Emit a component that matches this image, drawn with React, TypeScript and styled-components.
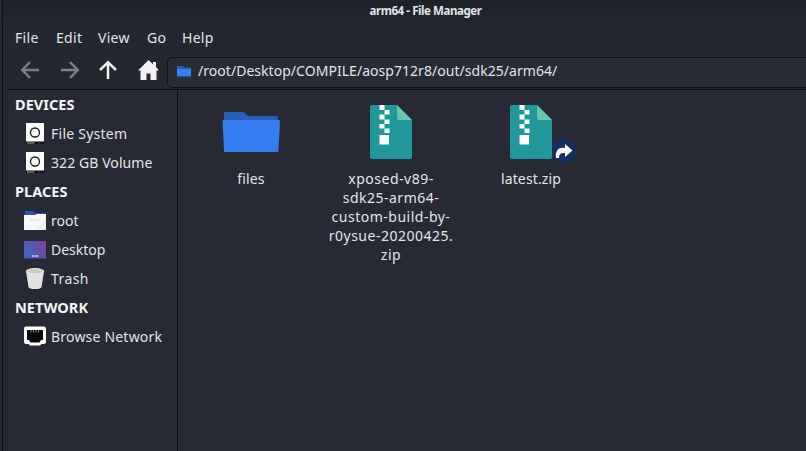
import React from "react";
import styled, { createGlobalStyle } from "styled-components";

const GlobalStyle = createGlobalStyle`
  * { box-sizing: border-box; }
  body {
    margin: 0;
    overflow: hidden;
    background: #272a34;
    color: #e2e4e9;
    font-family: "Noto Sans", "Open Sans", sans-serif;
    font-size: 14px;
  }
`;

const Window = styled.div`
  width: 806px;
  height: 451px;
  display: flex;
  flex-direction: column;
  background: #232730;
  border-left: 2px solid #242832;
  box-shadow: inset 1px 0 0 #0d0f18;
  overflow: hidden;
`;

const TitleBar = styled.header`
  height: 24px;
  flex: none;
  padding: 0 0 4px 43px;
  display: flex;
  align-items: center;
  justify-content: center;
  background: linear-gradient(#1d2129, #22262f);
  box-shadow: inset 1px 0 0 #0d0f18;
  font-size: 11.5px;
  font-weight: 700;
  letter-spacing: -0.42px;
`;

const MenuBar = styled.nav`
  height: 30px;
  flex: none;
  display: flex;
  align-items: center;
  padding: 0 0 2px 13px;
  letter-spacing: 0.3px;
`;

const MenuItem = styled.span<{ $width: number }>`
  width: ${(p) => p.$width}px;
  white-space: nowrap;
  line-height: 20px;
`;

const Toolbar = styled.div`
  height: 35px;
  flex: none;
  display: flex;
  align-items: center;
  padding-left: 18px;
`;

const NavButton = styled.span<{ $width: number; $dim?: boolean }>`
  width: ${(p) => p.$width}px;
  height: 32px;
  display: flex;
  flex: none;
  align-items: center;
  padding-bottom: 3px;
  color: ${(p) => (p.$dim ? "#7d8088" : "#f1f2f1")};
`;

const PathField = styled.div`
  flex: 1;
  height: 31px;
  margin: 1px -6px 0 0;
  display: flex;
  align-items: center;
  gap: 7px;
  padding: 0 0 2px 9px;
  border: 1px solid #0e111a;
  border-radius: 5px;
  background: #272b35;
  white-space: nowrap;
`;

const PathText = styled.span`
  line-height: 20px;
  letter-spacing: 0.04px;
`;

const Body = styled.div`
  flex: 1;
  display: flex;
  margin-left: 6px;
  border-top: 1px solid #0b0d14;
  background: #272a34;
`;

const Sidebar = styled.aside`
  width: 170px;
  border-right: 1px solid #0e111a;
`;

const Heading = styled.h2`
  height: 29px;
  margin: 0;
  padding-left: 7px;
  color: #f4f5f7;
  font-size: 14.5px;
  font-weight: 700;
  line-height: 28px;
  letter-spacing: 0.05px;
`;

const Place = styled.div<{ $spacing?: number }>`
  height: 29px;
  display: flex;
  align-items: center;
  gap: 5px;
  padding-left: 16px;
  line-height: 29px;
  letter-spacing: ${(p) => p.$spacing ?? 0}px;
  white-space: nowrap;
  svg { flex: none; }
`;

const Files = styled.main`
  flex: 1;
  display: grid;
  grid-template-columns: 140px 140px 140px;
  align-content: start;
  padding: 10px 0 0 3px;
`;

const FileItem = styled.figure`
  margin: 0;
  display: flex;
  flex-direction: column;
  align-items: center;
`;

const FileIcon = styled.div`
  position: relative;
  height: 69px;
  left: -0.5px;
  svg { display: block; }
`;

const LinkBadge = styled.span`
  position: absolute;
  left: 42px;
  top: 39px;
`;

const FileName = styled.figcaption<{ $spacing?: number }>`
  text-align: center;
  line-height: 19px;
  letter-spacing: ${(p) => p.$spacing ?? 0.15}px;
  white-space: nowrap;
`;

const Arrow = ({ rotate }: { rotate: number }) => (
  <svg width="20" height="20" viewBox="0 0 20 20" fill="none" stroke="currentColor" strokeWidth="2.5">
    <path d="M19 10H3M10 2L2.3 10L10 18" transform={`rotate(${rotate} 10 10)`} />
  </svg>
);

const Home = () => (
  <svg width="22" height="20" viewBox="0 0 22 20" fill="currentColor">
    <path d="M10.500 0L15 4.200V2H18V7L21 10.500H18.500V20H12.500V13.500H8.500V20H2.500V10.500H0Z" />
  </svg>
);

const Drive = () => (
  <svg width="22" height="24" viewBox="0 0 22 24">
    <path d="M2 1H20V20H2Z" fill="#fbfbfa" />
    <path d="M2 19.500H20V22H2Z" fill="#08090e" />
    <path d="M3 21H10.500" stroke="#aeb0b3" />
    <path d="M14 21H15.500M17 21H18" stroke="#666970" />
    <circle cx="11" cy="10.500" r="4.500" fill="#fff" stroke="#17191a" strokeWidth="1.300" />
  </svg>
);

const RootFolder = () => (
  <svg width="22" height="22" viewBox="0 0 22 22">
    <path d="M1 3V1H9L11 3H20.500V8H1Z" fill="#2855aa" />
    <path d="M0 5H11L13 4H22V20H0Z" fill="#f8f8fb" />
    <path d="M22 10V20H12Z" fill="#ededf4" />
    <path d="M6 10H15" stroke="#dcc4d0" strokeWidth=".8" />
  </svg>
);

const Desktop = () => (
  <svg width="22" height="18" viewBox="0 0 22 18">
    <defs>
      <linearGradient id="desk" x1="0" x2="1" y1=".6" y2=".3">
        <stop stopColor="#4264c0" />
        <stop offset="1" stopColor="#74469a" />
      </linearGradient>
    </defs>
    <rect width="22" height="17.500" fill="url(#desk)" />
    <path d="M8 15H14" stroke="#e0e2f2" strokeWidth="1.400" strokeDasharray="1.600 .6" />
  </svg>
);

const Trash = () => (
  <svg width="22" height="24" viewBox="0 0 22 24">
    <path d="M2 4L4.500 20Q5 22 11 22T17.500 20L20 4Z" fill="#e2e2e1" />
    <ellipse cx="11" cy="4" rx="9" ry="3" fill="#eeeeed" />
    <ellipse cx="11" cy="4.300" rx="7.800" ry="2.200" fill="#c8c8c7" />
  </svg>
);

const Port = () => (
  <svg width="22" height="22" viewBox="0 0 22 22">
    <path d="M2 .5H20Q22 .5 22 2.500V16Q22 18 20 18H17.500L16 19.500H6L4.500 18H2Q0 18 0 16V2.500Q0 .5 2 .5Z" fill="#fff" />
    <path d="M3 4H19V14H17L15.500 16.500H6.500L5 14H3Z" fill="#08090a" />
    <path d="M7 4V6.500M9.500 4V6.500M12 4V6.500M14.500 4V6.500" stroke="#a6a6a6" strokeWidth=".8" />
  </svg>
);

const Folder = ({ width, height }: { width: number; height: number }) => (
  <svg width={width} height={height} viewBox="0 0 58 54" preserveAspectRatio="none">
    <path d="M2 12H21Q23 12 24 14L26 16H54Q56 16 56 18V26H2Z" fill="#285eb4" />
    <path d="M.5 21Q.5 20 1.500 20H57Q58 20 58 21L56.500 51Q56.500 52 55 52H3Q2 52 2 51Z" fill="#367bef" />
  </svg>
);

const PathFolder = () => (
  <svg width="14" height="11" viewBox="0 0 14 11">
    <path d="M0 0H6L7 1.500H14V10H0Z" fill="#285eb4" />
    <path d="M0 3H14V10.500H0Z" fill="#3c7ced" />
  </svg>
);

const Zip = () => (
  <svg width="42" height="60" viewBox="0 0 42 60">
    <path d="M2 5H27L42 20V57Q42 59 40 59H2Q0 59 0 57V7Q0 5 2 5Z" fill="#21979a" />
    <path d="M27 5L42 20H29Q27 20 27 18Z" fill="#69c2ae" />
    <path d="M9.500 5h5v5h-5zM14.500 10h5v4.500h-5zM9.500 14.500h5v5h-5zM14.500 19.500h5v4.500h-5zM9.500 24h5v4.500h-5zM14.500 28.500h5v4.500h-5zM9.500 35h9.500v9.500h-9.500z" fill="#fafefd" />
  </svg>
);

const Link = () => (
  <svg width="24" height="24" viewBox="0 0 24 24">
    <circle cx="12" cy="12" r="12" fill="#132f62" />
    <path d="M4 19C3 11 7 8 13 9V5L20.500 11.500L13 18V14C9 13.500 7 15 7 19Z" fill="#fff" />
  </svg>
);

const longName = ["xposed-v89-", "sdk25-arm64-", "custom-build-by-", "r0ysue-20200425.", "zip"];

export default function App() {
  return (
    <>
      <GlobalStyle />
      <Window>
        <TitleBar>arm64 - File Manager</TitleBar>
        <MenuBar>
          <MenuItem $width={41}>File</MenuItem>
          <MenuItem $width={42}>Edit</MenuItem>
          <MenuItem $width={49}>View</MenuItem>
          <MenuItem $width={35}>Go</MenuItem>
          <MenuItem $width={40}>Help</MenuItem>
        </MenuBar>
        <Toolbar>
          <NavButton $width={40} $dim><Arrow rotate={0} /></NavButton>
          <NavButton $width={38} $dim><Arrow rotate={180} /></NavButton>
          <NavButton $width={40}><Arrow rotate={90} /></NavButton>
          <NavButton $width={29}><Home /></NavButton>
          <PathField>
            <PathFolder />
            <PathText>/root/Desktop/COMPILE/aosp712r8/out/sdk25/arm64/</PathText>
          </PathField>
        </Toolbar>
        <Body>
          <Sidebar>
            <Heading>DEVICES</Heading>
            <Place $spacing={0.25}><Drive />File System</Place>
            <Place $spacing={0.08}><Drive />322 GB Volume</Place>
            <Heading>PLACES</Heading>
            <Place><RootFolder />root</Place>
            <Place><Desktop />Desktop</Place>
            <Place $spacing={0.4}><Trash />Trash</Place>
            <Heading>NETWORK</Heading>
            <Place $spacing={0.2}><Port />Browse Network</Place>
          </Sidebar>
          <Files>
            <FileItem>
              <FileIcon><Folder width={58} height={54} /></FileIcon>
              <FileName>files</FileName>
            </FileItem>
            <FileItem>
              <FileIcon><Zip /></FileIcon>
              <FileName $spacing={0.5}>{longName.map((part) => <div key={part}>{part}</div>)}</FileName>
            </FileItem>
            <FileItem>
              <FileIcon><Zip /><LinkBadge><Link /></LinkBadge></FileIcon>
              <FileName>latest.zip</FileName>
            </FileItem>
          </Files>
        </Body>
      </Window>
    </>
  );
}
